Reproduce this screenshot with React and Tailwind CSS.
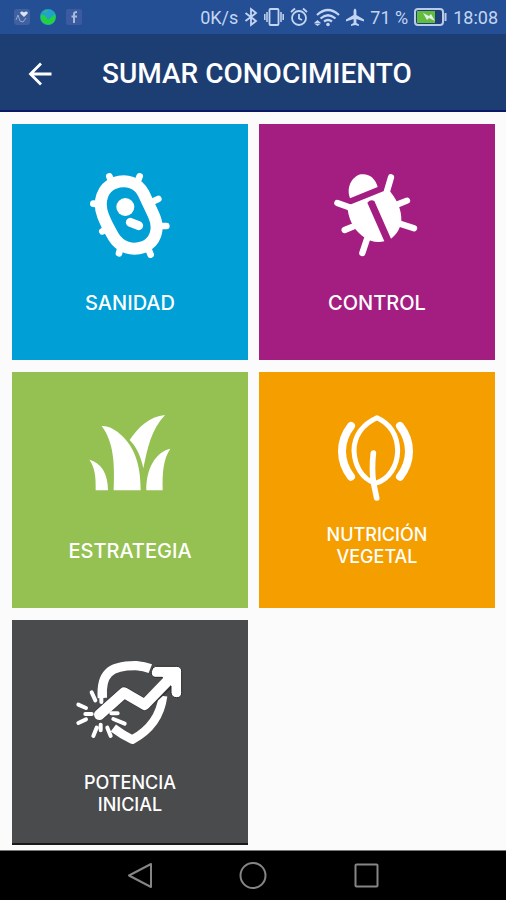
import React from "react";

function BacteriaIcon() {
  return (
    <svg viewBox="0 -21 330 330" className="h-[110px] w-[110px]" aria-hidden="true">
      <g stroke="#fff" strokeWidth="20" strokeLinecap="round" fill="none">
        <path d="M103 52l8 20M194 52l-8 20M55 134l22 3M82 217l18-10M132 283l6-22M227 287l-8-20M274 201l-22 0M250 120l-20 9" />
        <path d="M84 170C68 128 82 86 118 72C154 60 190 70 206 104L236 168C256 212 240 250 206 264C172 276 136 266 116 234C102 210 92 192 84 170Z" strokeWidth="36" />
      </g>
      <circle cx="151" cy="144" r="27" fill="#fff" />
      <path d="M166 190l25 10" stroke="#fff" strokeWidth="27" strokeLinecap="round" />
    </svg>
  );
}

function BugIcon() {
  return (
    <svg viewBox="0 -21 330 330" className="h-[110px] w-[110px]" aria-hidden="true">
      <path d="M84 118C72 86 88 54 116 46C142 42 160 58 167 84Z" fill="#fff" />
      <path d="M76 140L199 91C222 118 240 150 238 186C234 212 222 228 207 239L157 126Q146 120 136 131L187 247C164 253 140 246 120 230C92 208 78 176 76 140Z" fill="#fff" />
      <path d="M207 55L195 96M46 132L86 146M68 213L100 200M121 282L135 240M255 125L222 138M276 208L234 194" stroke="#fff" strokeWidth="19" strokeLinecap="round" />
    </svg>
  );
}

function GrassIcon() {
  return (
    <svg viewBox="0 0 330 330" className="h-[110px] w-[110px]" aria-hidden="true">
      <g fill="#fff">
        <path d="M43 179C78 188 99 220 99 271H62C63 232 60 203 43 179Z" />
        <path d="M80 78C94 76 110 83 128 96C176 134 197 188 197 271H116C120 188 115 124 80 78Z" />
        <path d="M164 120C190 80 226 49 270 45C228 90 218 142 205 205C198 170 184 140 164 120Z" />
        <path d="M214 271C213 206 242 156 286 146C264 178 262 220 263 271Z" />
      </g>
    </svg>
  );
}

function LeafIcon() {
  return (
    <svg viewBox="0 0 330 330" className="h-[110px] w-[110px]" aria-hidden="true">
      <g fill="none" stroke="#fff" strokeLinecap="round" strokeLinejoin="round">
        <path d="M165 53C122 72 96 108 96 152C98 196 118 236 160 250C202 238 226 198 227 152C226 108 206 72 165 53Z" strokeWidth="15" />
        <path d="M154 159C150 196 151 222 154 246L164 294" strokeWidth="17" />
        <path d="M87 78C51 124 51 184 87 230M234 78C270 124 270 184 234 230" strokeWidth="24" />
      </g>
    </svg>
  );
}

function PowerIcon() {
  return (
    <svg viewBox="0 -6 390 330" className="h-[110px] w-[130px]" aria-hidden="true">
      <g fill="none" stroke="#fff">
        <path d="M112 144C107 74 132 46 214 47Q238 49 256 56" strokeWidth="28" />
        <path d="M145 234Q174 256 202 269C252 242 286 202 294 138" strokeWidth="26" strokeLinejoin="round" />
      </g>
      <path d="M103 194L177 128L239 164L312 96" fill="none" stroke="#333436" strokeWidth="36" strokeLinejoin="round" />
      <path d="M272 49H334Q350 49 350 65V128Q350 143 335 143T318 128V108L292 82H270Q257 79 259 65T272 49Z" fill="#fff" stroke="#262728" strokeWidth="3" />
      <path d="M103 194L177 128L239 164L324 76" fill="none" stroke="#fff" strokeWidth="32" strokeLinecap="round" strokeLinejoin="round" />
      <path d="M80 127L91 151M40 164L63 174M61 192H80M40 219L63 208M85 258L95 233M107 241V224M137 258L127 233M145 207L179 221M139 190H158M109 143V156" stroke="#fff" strokeWidth="12" strokeLinecap="round" />
    </svg>
  );
}

const tiles = [
  { lines: ["SANIDAD"], color: "bg-[#009fd6]", Icon: BacteriaIcon },
  { lines: ["CONTROL"], color: "bg-[#a31e80]", Icon: BugIcon },
  { lines: ["ESTRATEGIA"], color: "bg-[#95c153]", Icon: GrassIcon },
  { lines: ["NUTRICIÓN", "VEGETAL"], color: "bg-[#f59e00]", Icon: LeafIcon },
  { lines: ["POTENCIA", "INICIAL"], color: "bg-[#4a4b4d]", Icon: PowerIcon, short: true },
];

function Tile({ lines, color, Icon, short }) {
  return (
    <button
      type="button"
      className={`flex flex-col items-center pt-7 text-white ${color} ${short ? "h-[225px] border-b-2 border-[#19191b]" : "h-[236px]"}`}
    >
      <Icon />
      <span
        className={`flex flex-col justify-center font-['Inter',sans-serif] font-medium ${lines.length > 1 ? "h-[72px] text-[18px] leading-[22px]" : "h-[82px] text-[20px] leading-[22px]"}`}
      >
        {lines.map((line) => (
          <span key={line}>{line}</span>
        ))}
      </span>
    </button>
  );
}

function StatusBar() {
  return (
    <div className="flex h-[34px] items-center bg-[#244f94] pl-3.5 pr-2 text-[18px] text-[#c3d5f3]">
      <div className="flex items-center gap-2.5">
        <svg viewBox="0 0 16 16" className="h-4 w-4" aria-hidden="true">
          <rect width="16" height="16" rx="3" fill="#40609f" />
          <path d="M10 8L6.600 4.800C5 2.500 8.500 1.500 10 3.500C11.500 1.500 15 2.500 13.400 4.800Z" fill="#dce5f5" />
          <path d="M2 11L4 6L6 12L9 13L12 9" fill="none" stroke="#91a9d4" />
        </svg>
        <svg viewBox="0 0 16 16" className="h-4 w-4" aria-hidden="true">
          <circle cx="8" cy="8" r="8" fill="#1fa3c9" />
          <path d="M1 6Q4 5 6 8L8 11L15 5Q17 13 10 15.500Q4 16 1 11Z" fill="#25d13f" />
          <path d="M4 2L8 1L6 4Z" fill="#31bd73" />
        </svg>
        <svg viewBox="0 0 16 16" className="h-4 w-4" aria-hidden="true">
          <rect width="16" height="16" rx="2" fill="#3a5ba0" />
          <path d="M8 14V5Q8 3 11 3M5.500 7.500H11" fill="none" stroke="#a8b9dd" strokeWidth="2" />
        </svg>
      </div>
      <div className="ml-auto flex items-center gap-1.5">
        <span>0K/s</span>
        <svg viewBox="0 0 14 20" className="h-5 w-3.5" fill="none" stroke="currentColor" strokeWidth="1.800" aria-hidden="true">
          <path d="M1.500 6L12 14L7 18V2L12 6L1.500 14" />
        </svg>
        <svg viewBox="0 0 20 20" className="h-5 w-5" fill="none" stroke="currentColor" strokeWidth="1.800" aria-hidden="true">
          <rect x="5.500" y="2" width="9" height="16" rx="1" />
          <path d="M3 5v10M17 5v10M.8 7v6M19.200 7v6" strokeWidth="1.500" />
        </svg>
        <svg viewBox="0 0 18 20" className="h-5 w-[18px]" fill="none" stroke="currentColor" strokeWidth="1.800" aria-hidden="true">
          <circle cx="9" cy="11" r="7" />
          <path d="M9 7V11.500L12 13M1 5L5 1.500M17 5L13 1.500" />
        </svg>
        <svg viewBox="0 0 26 20" className="h-5 w-[26px]" fill="none" stroke="currentColor" strokeWidth="2.200" aria-hidden="true">
          <path d="M3 8Q14 -2 25 8M6.500 11.500Q14 5 21.500 11.500M10 14.500Q14 11.500 18 14.500" />
          <circle cx="14" cy="17.500" r="1.800" fill="currentColor" stroke="none" />
          <path d="M3.500 13L0 16H7ZM3.500 19L0 16.500H7Z" fill="currentColor" stroke="none" />
        </svg>
        <svg viewBox="0 0 18 18" className="h-[18px] w-[18px]" fill="currentColor" aria-hidden="true">
          <path d="M9 .5Q10.400 1 10.400 3V7L18 11.500V13.500L10.400 11V15L13 16.500V18L9 17L5 18V16.500L7.600 15V11L0 13.500V11.500L7.600 7V3Q7.600 1 9 .5Z" />
        </svg>
        <span>71 %</span>
        <svg viewBox="0 0 33 18" className="h-[18px] w-[33px]" aria-hidden="true">
          <rect x="1" y="1" width="28" height="16" rx="3" fill="#203f78" stroke="#b9cbe8" strokeWidth="2" />
          <path d="M3 3H21V15H3Z" fill="#62bd3c" />
          <path d="M9 5L15 8L17 6L21 13L15 10L13 12Z" fill="#e2eee7" />
          <path d="M31.500 5V13" stroke="#b9cbe8" strokeWidth="2" />
        </svg>
        <span>18:08</span>
      </div>
    </div>
  );
}

export default function App() {
  return (
    <div className="flex min-h-screen flex-col bg-[#fbfbfb] font-['Roboto',sans-serif]">
      <StatusBar />
      <header className="flex h-[78px] items-center border-b-2 border-[#0b1767] bg-[#1d3e73] pl-7 pt-1 text-white">
        <button type="button" aria-label="Volver" className="h-6 w-6">
          <svg viewBox="0 0 24 24" className="h-6 w-6" fill="none" stroke="currentColor" strokeWidth="2.800" aria-hidden="true">
            <path d="M23.500 12H3M13 1.500L2.500 12L13 22.500" />
          </svg>
        </button>
        <h1 className="ml-[50px] text-[28px] font-medium leading-8">SUMAR CONOCIMIENTO</h1>
      </header>
      <main className="grid flex-1 grid-cols-2 content-start gap-x-[11px] gap-y-3 pb-[5px] pl-3 pr-[11px] pt-3">
        {tiles.map((tile) => (
          <Tile key={tile.lines[0]} {...tile} />
        ))}
      </main>
      <nav className="flex h-[50px] items-center justify-center gap-[86px] border-t border-[#777] bg-black text-[#858585]">
        <button type="button" aria-label="Atrás">
          <svg viewBox="0 0 28 28" className="h-7 w-7" fill="none" stroke="currentColor" strokeWidth="2" strokeLinejoin="round" aria-hidden="true">
            <path d="M26 2V25L4 13.500Z" />
          </svg>
        </button>
        <button type="button" aria-label="Inicio">
          <svg viewBox="0 0 28 28" className="h-7 w-7" fill="none" stroke="currentColor" strokeWidth="2" aria-hidden="true">
            <circle cx="14" cy="13.500" r="12.500" />
          </svg>
        </button>
        <button type="button" aria-label="Recientes">
          <svg viewBox="0 0 28 28" className="h-7 w-7" fill="none" stroke="currentColor" strokeWidth="2" aria-hidden="true">
            <rect x="2.500" y="2.500" width="22" height="22" rx="1" />
          </svg>
        </button>
      </nav>
    </div>
  );
}
